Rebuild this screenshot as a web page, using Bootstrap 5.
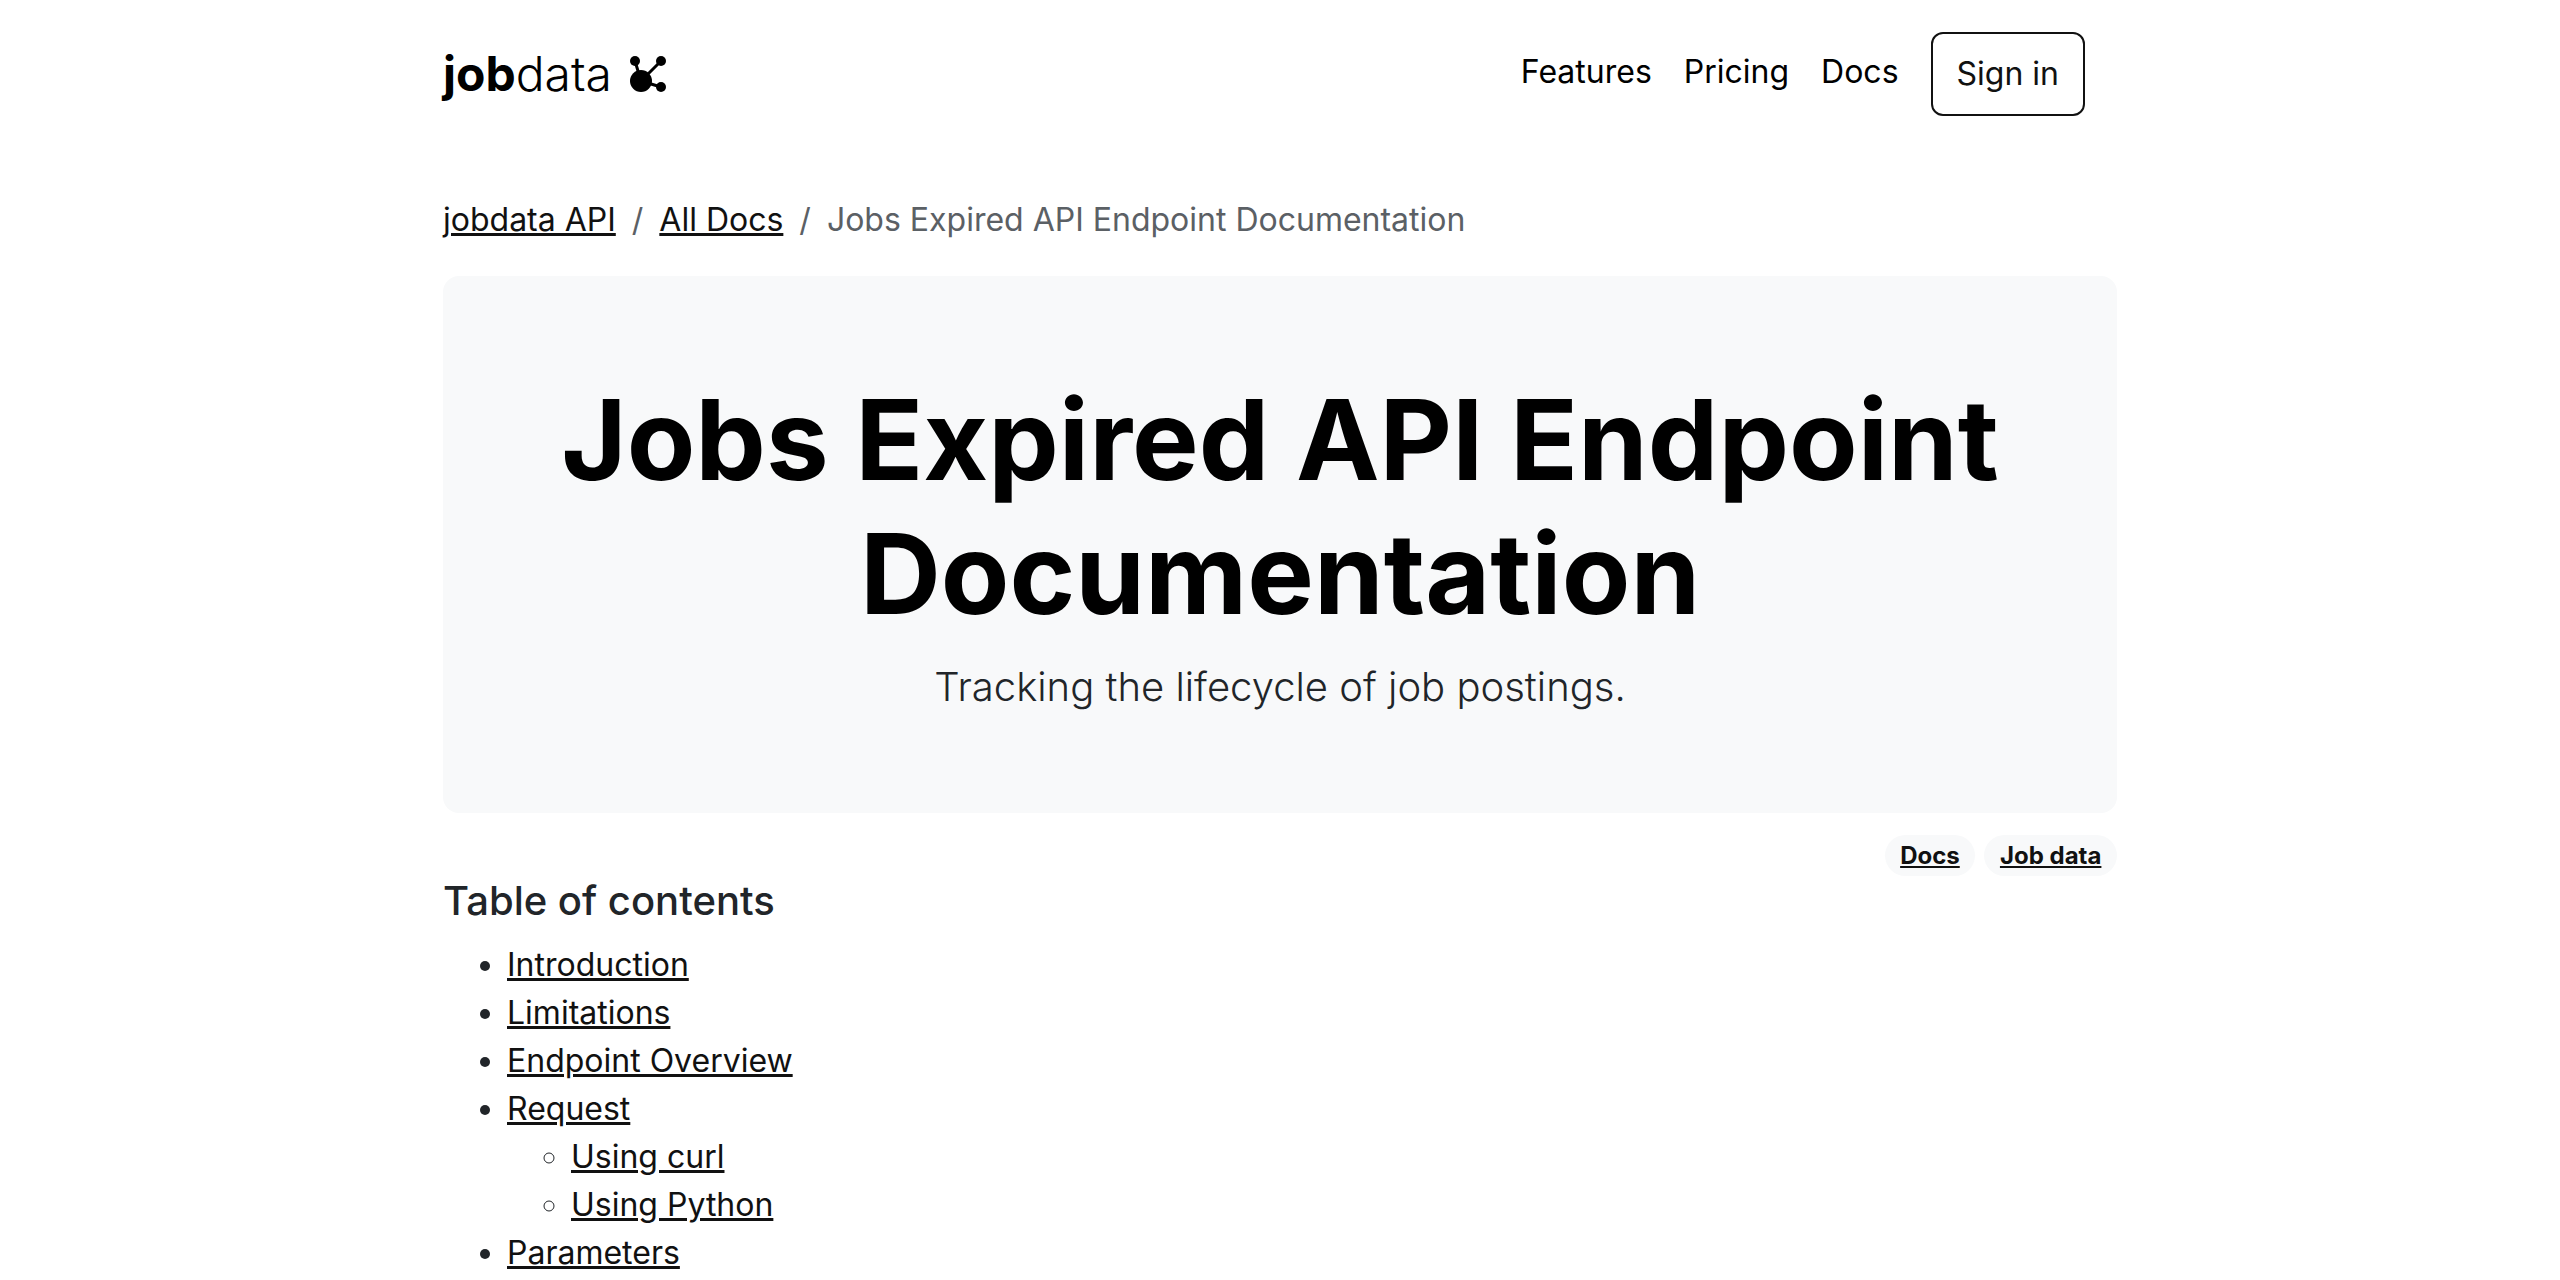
<!DOCTYPE html>
<html lang="en">
<head>
<meta charset="utf-8">
<meta name="viewport" content="width=device-width, initial-scale=1">
<title>Jobs Expired API Endpoint Documentation</title>
<link href="https://cdn.jsdelivr.net/npm/bootstrap@5.3.0/dist/css/bootstrap.min.css" rel="stylesheet">
<style>
html { font-size: 32px; }
body { font-family: Inter, "Noto Sans", sans-serif; }
.page-wrap { max-width: 1722px; padding-left: 24px; padding-right: 24px; }
a, .badge.tag-pill { color: #111; }
.site-header { margin-bottom: 48px; }
.brand { font-size: 48px; line-height: 72px; font-weight: 300; color: #000; gap: 18px; }
.brand svg { width: 36px; height: 36px; }
.top-link { color: #000; }
.btn-signin { --bs-btn-color: #111; --bs-btn-border-color: #111; --bs-btn-border-width: 2px; --bs-btn-padding-x: 24px; --bs-btn-padding-y: 16px; --bs-btn-border-radius: 12px; --bs-btn-hover-bg: #111; --bs-btn-hover-color: #fff; }
.breadcrumb { --bs-breadcrumb-divider-color: #5b6065; --bs-breadcrumb-item-active-color: #5b6065; }
.hero { border-radius: 16px; }
.hero h1 { font-size: 112px; color: #000; }
.hero p, .toc-title { font-size: 40px; }
</style>
</head>
<body>
<div class="container-fluid page-wrap">
  <header class="site-header d-flex align-items-center justify-content-between py-3">
    <a class="brand d-flex align-items-center text-decoration-none" href="#"><span><strong class="fw-bold">job</strong>data</span>
      <svg viewBox="30 29 108 108" aria-hidden="true"><path d="M45 44 63 104 123 44M63 104 123 122" fill="none" stroke="#000" stroke-width="9"/><circle cx="45" cy="44" r="15"/><circle cx="123" cy="44" r="15"/><circle cx="123" cy="122" r="15"/><circle cx="63" cy="104" r="33"/></svg>
    </a>
    <nav class="d-flex align-items-start me-3">
      <a class="top-link p-2 text-decoration-none" href="#">Features</a>
      <a class="top-link p-2 text-decoration-none" href="#">Pricing</a>
      <a class="top-link p-2 text-decoration-none" href="#">Docs</a>
      <button type="button" class="btn btn-signin ms-2">Sign in</button>
    </nav>
  </header>
  <main>
    <nav aria-label="breadcrumb">
      <ol class="breadcrumb mb-3">
        <li class="breadcrumb-item"><a href="#">jobdata API</a></li>
        <li class="breadcrumb-item"><a href="#">All Docs</a></li>
        <li class="breadcrumb-item active" aria-current="page">Jobs Expired API Endpoint Documentation</li>
      </ol>
    </nav>
    <section class="hero bg-light text-center p-5 mb-2">
      <h1 class="fw-bold mb-2">Jobs Expired API Endpoint Documentation</h1>
      <p class="fw-light mb-0">Tracking the lifecycle of job postings.</p>
    </section>
    <div class="text-end">
      <a class="badge tag-pill rounded-pill bg-light text-decoration-underline" href="#">Docs</a>
      <a class="badge tag-pill rounded-pill bg-light text-decoration-underline" href="#">Job data</a>
    </div>
    <h2 class="toc-title mb-2">Table of contents</h2>
    <ul class="mb-0">
      <li><a href="#">Introduction</a></li>
      <li><a href="#">Limitations</a></li>
      <li><a href="#">Endpoint Overview</a></li>
      <li><a href="#">Request</a>
        <ul>
          <li><a href="#">Using curl</a></li>
          <li><a href="#">Using Python</a></li>
        </ul>
      </li>
      <li><a href="#">Parameters</a></li>
    </ul>
  </main>
</div>
<script src="https://cdn.jsdelivr.net/npm/bootstrap@5.3.0/dist/js/bootstrap.bundle.min.js"></script>
</body>
</html>
